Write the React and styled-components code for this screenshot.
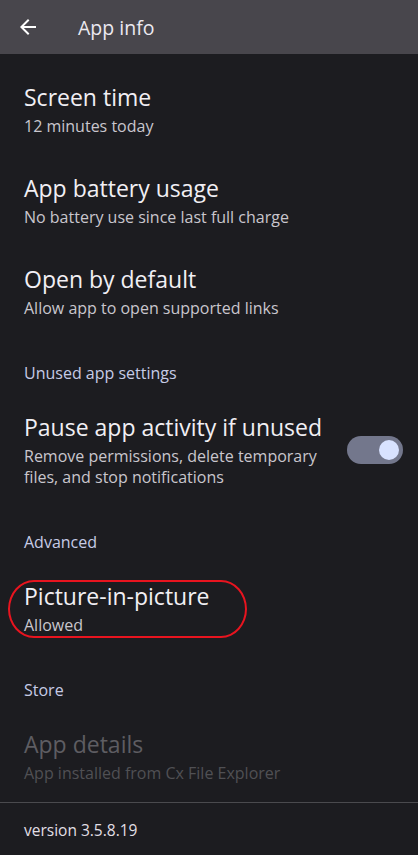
import styled, { createGlobalStyle } from "styled-components";

const GlobalStyle = createGlobalStyle`
  html, body {
    margin: 0;
    padding: 0;
    background: #1c1c20;
  }
  body {
    font-family: "Open Sans", Roboto, sans-serif;
  }
`;

function BackArrow() {
  return (
    <svg width="24" height="24" viewBox="0 0 24 24" fill="#ffffff">
      <path d="M20 11H7.83l5.59-5.59L12 4l-8 8 8 8 1.41-1.41L7.83 13H20v-2z" />
    </svg>
  );
}

function App() {
  return (
    <Page>
      <GlobalStyle />
      <TopBar>
        <BackButton>
          <BackArrow />
        </BackButton>
        <Title>App info</Title>
      </TopBar>

      <List>
        <Item>
          <ItemTitle>Screen time</ItemTitle>
          <ItemSub>12 minutes today</ItemSub>
        </Item>
        <Item>
          <ItemTitle>App battery usage</ItemTitle>
          <ItemSub>No battery use since last full charge</ItemSub>
        </Item>
        <Item>
          <ItemTitle>Open by default</ItemTitle>
          <ItemSub>Allow app to open supported links</ItemSub>
        </Item>

        <SectionHeader>Unused app settings</SectionHeader>
        <SwitchItem>
          <ItemText>
            <ItemTitle>Pause app activity if unused</ItemTitle>
            <ItemSub>
              Remove permissions, delete temporary files, and stop
              notifications
            </ItemSub>
          </ItemText>
          <Switch>
            <Thumb />
          </Switch>
        </SwitchItem>

        <SectionHeader>Advanced</SectionHeader>
        <Item>
          <Marked />
          <ItemTitle>Picture-in-picture</ItemTitle>
          <ItemSub>Allowed</ItemSub>
        </Item>

        <SectionHeader>Store</SectionHeader>
        <Item $height={73}>
          <ItemTitle $disabled>App details</ItemTitle>
          <ItemSub $disabled>App installed from Cx File Explorer</ItemSub>
        </Item>
      </List>

      <Footer>version 3.5.8.19</Footer>
    </Page>
  );
}

const Page = styled.div`
  width: 418px;
  min-height: 855px;
  background: #1c1c20;
  color: #e6e1e9;
`;

const TopBar = styled.div`
  height: 54px;
  background: #48464c;
  display: flex;
  align-items: center;
`;

const BackButton = styled.div`
  width: 56px;
  padding-left: 16px;
  display: flex;
  align-items: center;
  box-sizing: border-box;
  svg {
    width: 24px;
    height: 24px;
  }
`;

const Title = styled.div`
  margin-left: 22px;
  font-size: 19.5px;
  color: #eceaf0;
`;

const List = styled.div`
  display: flex;
  flex-direction: column;
  padding-top: 28px;
`;

const Item = styled.div`
  position: relative;
  padding: 0 24px;
  height: ${(p) => p.$height || 91}px;
  box-sizing: border-box;
  display: flex;
  flex-direction: column;
`;

const SwitchItem = styled.div`
  padding: 0 15px 0 24px;
  height: 112px;
  box-sizing: border-box;
  display: flex;
  align-items: flex-start;
  justify-content: space-between;
`;

const ItemText = styled.div`
  display: flex;
  flex-direction: column;
  width: 300px;
`;

const ItemTitle = styled.div`
  font-size: 23px;
  line-height: 30px;
  white-space: nowrap;
  color: ${(p) => (p.$disabled ? "#5e5d62" : "#f1eff4")};
`;

const ItemSub = styled.div`
  font-size: 16px;
  line-height: 21px;
  margin-top: 4px;
  color: ${(p) => (p.$disabled ? "#505054" : "#c9c6cd")};
`;

const SectionHeader = styled.div`
  padding: 8px 24px 29px;
  font-size: 16px;
  font-weight: 500;
  line-height: 20px;
  color: #c6cbe6;
`;

const Switch = styled.div`
  margin-top: 24px;
  width: 56px;
  height: 28px;
  flex-shrink: 0;
  border-radius: 14px;
  background: #73778c;
  display: flex;
  align-items: center;
  justify-content: flex-end;
  padding-right: 4px;
  box-sizing: border-box;
`;

const Thumb = styled.div`
  width: 20px;
  height: 20px;
  border-radius: 50%;
  background: #d8e2ff;
`;

const Marked = styled.div`
  position: absolute;
  left: 8px;
  top: -1px;
  width: 239px;
  height: 58px;
  box-sizing: border-box;
  border: 2px solid #e8141f;
  border-radius: 26px / 29px;
  pointer-events: none;
`;

const Footer = styled.div`
  border-top: 1px solid #4a4a4e;
  padding: 17px 24px;
  font-size: 15.5px;
  line-height: 20px;
  color: #e1dfe5;
`;

export default App;
